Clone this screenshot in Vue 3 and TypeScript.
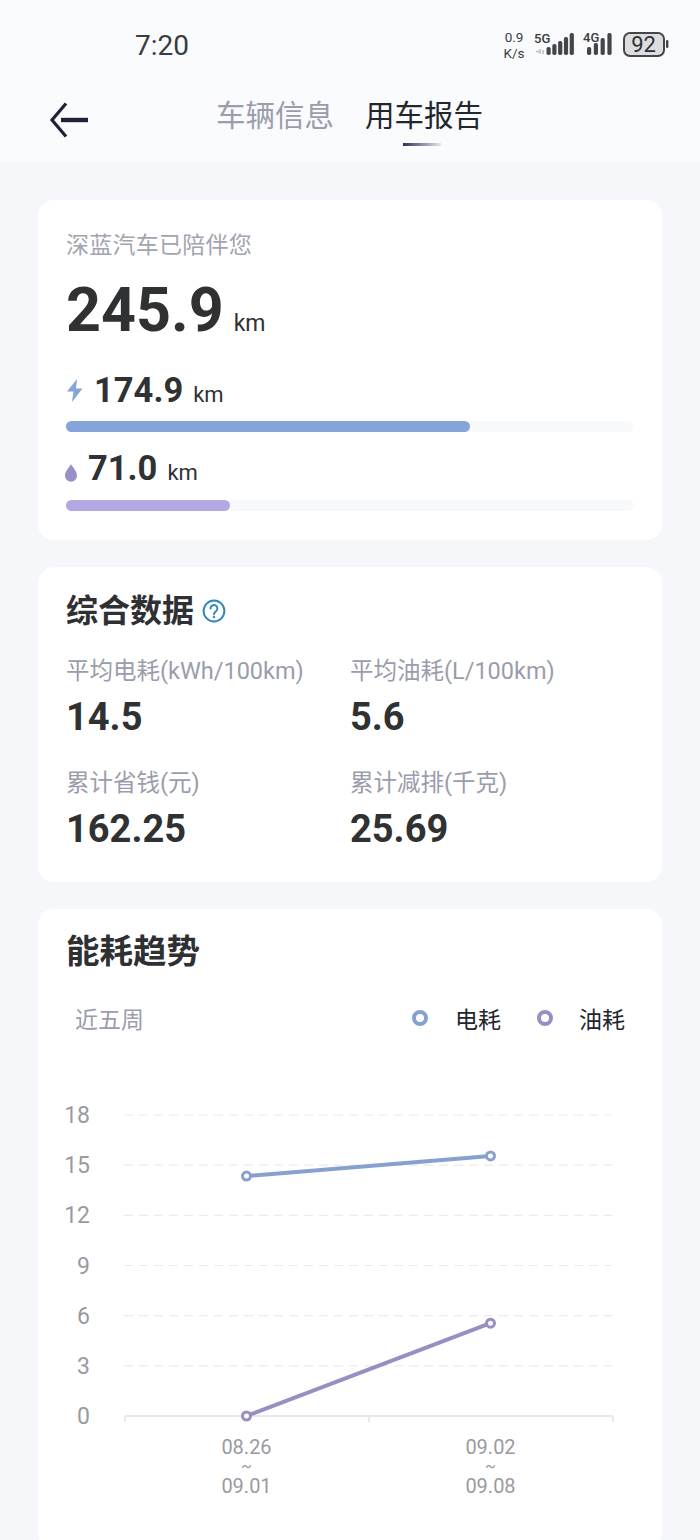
<template>
  <div class="page">
    <header class="top">
      <div class="status">
        <span class="time">7:20</span>
        <svg class="status-icons" width="170" height="34" viewBox="0 0 170 34">
          <text x="14" y="13" class="net">0.9</text>
          <text x="14" y="28.5" class="net">K/s</text>
          <text x="34" y="14" class="gen">5G</text>
          <path d="M36 22.500h3M40 20v5M43 21v4" class="tiny" />
          <rect v-for="b in fiveG" :key="'a' + b.x" :x="b.x" :y="b.y" width="4.2" :height="b.h" rx="1.8" class="bar" />
          <text x="83" y="13" class="gen">4G</text>
          <rect v-for="b in fourG" :key="'b' + b.x" :x="b.x" :y="b.y" width="4.2" :height="b.h" rx="1.8" class="bar" />
          <rect x="124" y="4" width="40" height="23" rx="6" class="batt" />
          <rect x="166" y="11" width="2.4" height="8" rx="1.2" class="bar" />
          <text x="143.5" y="23" class="batt-num">92</text>
        </svg>
      </div>
      <nav class="nav">
        <svg class="back" width="40" height="36" viewBox="0 0 40 36">
          <path d="M17 1.500 3 18l14 16.500" />
          <path d="M12 18h27" class="shaft" />
        </svg>
        <div class="tabs">
          <span class="tab">车辆信息</span>
          <span class="tab on">用车报告</span>
        </div>
      </nav>
    </header>

    <main class="list">
      <section class="card total">
        <p class="caption">深蓝汽车已陪伴您</p>
        <p class="sum"><b>245.9</b><i>km</i></p>
        <div class="range">
          <svg width="18" height="24" viewBox="0 0 18 24"><path d="M11 0 1 12.500h6.500L6 23 16.500 9.500H10z" fill="#84a4da" /></svg>
          <b>174.9</b><i>km</i>
        </div>
        <div class="track"><div class="fill" :style="{ width: '71.2%' }"></div></div>
        <div class="range oil">
          <svg width="12" height="18" viewBox="0 0 13 19"><path d="M6.500 0C9 4 13 7.500 13 12.500a6.500 6.500 0 0 1-13 0C0 7.500 4 4 6.500 0z" fill="#9b8fc8" /></svg>
          <b>71.0</b><i>km</i>
        </div>
        <div class="track low"><div class="fill purple" :style="{ width: '28.8%' }"></div></div>
      </section>

      <section class="card data">
        <h2>综合数据
          <svg width="24" height="24" viewBox="0 0 24 24">
            <circle cx="12" cy="12" r="10.400" fill="none" stroke="#2f87c0" stroke-width="2" />
            <path d="M8.600 9.500a3.400 3.400 0 1 1 5.400 2.700c-1.300 1-2 1.600-2 3" fill="none" stroke="#2f87c0" stroke-width="2" stroke-linecap="round" />
            <circle cx="12" cy="18" r="1.200" fill="#2f87c0" />
          </svg>
        </h2>
        <div class="grid">
          <div v-for="s in stats" :key="s.label" class="stat">
            <span>{{ s.label }}</span>
            <b>{{ s.value }}</b>
          </div>
        </div>
      </section>

      <section class="card trend">
        <h2>能耗趋势</h2>
        <div class="trend-head">
          <span class="period">近五周</span>
          <div class="legend">
            <span class="ring blue"></span><span class="name">电耗</span>
            <span class="ring violet"></span><span class="name second">油耗</span>
          </div>
        </div>
        <svg class="chart" width="624" height="420" viewBox="0 0 624 420">
          <g v-for="t in ticks" :key="t">
            <line v-if="t > 0" x1="86" x2="574" :y1="yOf(t)" :y2="yOf(t)" class="grid-line" />
            <text x="52" :y="yOf(t) + 8" class="tick">{{ t }}</text>
          </g>
          <path :d="`M87 ${yOf(0)}H575M87 ${yOf(0)}v6M331 ${yOf(0)}v6M575 ${yOf(0)}v6`" class="axis" />
          <polyline :points="linePoints(power)" class="line" stroke="#86a0d0" />
          <polyline :points="linePoints(oil)" class="line" stroke="#9a8dc2" />
          <circle v-for="(v, i) in power" :key="'p' + i" :cx="xs[i]" :cy="yOf(v)" r="4" class="dot" stroke="#86a0d0" />
          <circle v-for="(v, i) in oil" :key="'o' + i" :cx="xs[i]" :cy="yOf(v)" r="4" class="dot" stroke="#9a8dc2" />
          <g v-for="(d, i) in dates" :key="d[0]">
            <text :x="xs[i]" y="352" class="date">{{ d[0] }}</text>
            <text :x="xs[i]" y="370" class="date wave">~</text>
            <text :x="xs[i]" y="391" class="date">{{ d[1] }}</text>
          </g>
        </svg>
      </section>
    </main>
  </div>
</template>

<script setup lang="ts">
const makeBars = (start: number, pitch: number, heights: number[]) =>
  heights.map((h, i) => ({ x: start + i * pitch, y: 26 - h, h }))

const fiveG = makeBars(46.5, 5.8, [8, 11, 14, 18, 22])
const fourG = makeBars(87, 6.8, [8, 12, 17, 22])

const stats = [
  { label: '平均电耗(kWh/100km)', value: '14.5' },
  { label: '平均油耗(L/100km)', value: '5.6' },
  { label: '累计省钱(元)', value: '162.25' },
  { label: '累计减排(千克)', value: '25.69' },
]

const ticks = [18, 15, 12, 9, 6, 3, 0]
const xs = [208.5, 452.5]
const power = [14.35, 15.55]
const oil = [0, 5.55]
const dates = [
  ['08.26', '09.01'],
  ['09.02', '09.08'],
]

// y 轴 0 在 313,18 在 12
const yOf = (v: number) => 314 - (v * 301) / 18
const linePoints = (vals: number[]) => vals.map((v, i) => `${xs[i]},${yOf(v)}`).join(' ')
</script>

<style>
body {
  background: #f6f7fb;
}
</style>

<style scoped>
.page {
  width: 700px;
  height: 1540px;
  overflow: hidden;
  background: #f6f7fb;
  font-family: Roboto, "Noto Sans CJK SC", sans-serif;
  color: #303133;
}
p,
h2 {
  margin: 0;
}
i {
  font-style: normal;
}
.top {
  height: 162px;
  background: linear-gradient(180deg, #f9fafc, #fafbfc);
}
.status {
  height: 78px;
  padding: 0 30px 0 135px;
  display: flex;
  align-items: flex-end;
  justify-content: space-between;
  box-sizing: border-box;
}
.time {
  font-size: 28px;
  line-height: 32px;
  margin-bottom: 16px;
  color: #3a3c40;
}
.status-icons {
  margin-bottom: 15px;
}
.net {
  font-size: 13.500px;
  text-anchor: middle;
  fill: #3a3c40;
}
.gen {
  font-size: 13px;
  font-weight: 500;
  fill: #3a3c40;
}
.tiny {
  stroke: #b9bcc2;
  stroke-width: 1.5;
  fill: none;
}
.bar {
  fill: #44464a;
}
.batt {
  fill: #dcdde0;
  stroke: #44464a;
  stroke-width: 2;
}
.batt-num {
  font-size: 22px;
  text-anchor: middle;
  fill: #2f3033;
}
.nav {
  height: 84px;
  padding-left: 49px;
  display: flex;
}
.back {
  margin-top: 24px;
}
.back path {
  fill: none;
  stroke: #1f2236;
  stroke-width: 3.2;
}
.back .shaft {
  stroke-width: 4.4;
}
.tabs {
  margin-left: 127px;
  display: flex;
  gap: 31px;
  align-items: flex-start;
}
.tab {
  position: relative;
  font-size: 29.500px;
  line-height: 40px;
  margin-top: 18px;
  color: #9a9dab;
}
.tab.on {
  color: #24262e;
}
.tab.on::after {
  content: "";
  position: absolute;
  left: 38px;
  bottom: -10px;
  width: 38px;
  height: 3px;
  background: linear-gradient(90deg, #2c3058, #e6e8ee);
}
.list {
  padding: 38px 38px 0;
  display: flex;
  flex-direction: column;
  gap: 27px;
}
.card {
  background: #fff;
  border-radius: 16px;
  padding: 0 28px;
}
.total {
  height: 340px;
  box-sizing: border-box;
  padding-top: 28px;
}
.caption {
  font-size: 23px;
  letter-spacing: 0.25px;
  line-height: 36px;
  color: #a2a5af;
}
.sum {
  margin-top: 9px;
  line-height: 74px;
  height: 74px;
}
.sum b {
  font-size: 61px;
  font-weight: 700;
}
.sum i {
  font-size: 23px;
  margin-left: 10px;
}
.range {
  margin-top: 23px;
  height: 44px;
  display: flex;
  align-items: baseline;
}
.range svg {
  margin: -3px 10px 0 0;
  align-self: center;
}
.range b {
  font-size: 34.500px;
  font-weight: 700;
}
.range i {
  font-size: 22px;
  margin-left: 10px;
}
.range.oil {
  margin-top: 16px;
}
.range.oil svg {
  margin: 6px 11px 0 -1px;
}
.track {
  margin-top: 7px;
  height: 11px;
  border-radius: 6px;
  background: #f8f9fb;
}
.track.low {
  margin-top: 8px;
}
.fill {
  height: 100%;
  border-radius: 6px;
  background: #84a4da;
}
.fill.purple {
  background: #b4a7e4;
}
.data {
  height: 315px;
  box-sizing: border-box;
  padding-top: 22px;
}
h2 {
  font-size: 32px;
  line-height: 44px;
  font-weight: 700;
  color: #2f3033;
  display: flex;
  align-items: center;
  gap: 8px;
}
.grid {
  margin-top: 20px;
  display: grid;
  grid-template-columns: 284px 1fr;
  row-gap: 20px;
}
.stat {
  display: flex;
  flex-direction: column;
}
.stat span {
  font-size: 23.500px;
  line-height: 36px;
  color: #9a9dab;
}
.stat b {
  font-size: 38px;
  line-height: 56px;
  font-weight: 700;
}
.trend {
  height: 640px;
  box-sizing: border-box;
  padding-top: 21px;
}
.trend h2 {
  font-size: 33.500px;
}
.trend-head {
  margin-top: 24px;
  padding: 0 9px;
  display: flex;
  justify-content: space-between;
  align-items: center;
  height: 40px;
}
.period {
  font-size: 23px;
  color: #9a9dab;
}
.legend {
  display: flex;
  align-items: center;
}
.ring {
  width: 16px;
  height: 16px;
  box-sizing: border-box;
  border-radius: 50%;
  border: 4px solid;
}
.ring.blue {
  border-color: #86a0d0;
}
.ring.violet {
  border-color: #9a8dc2;
  margin-left: 36px;
}
.name {
  margin-left: 27px;
  font-size: 23px;
  color: #24262e;
}
.name.second {
  margin-left: 26px;
}
.chart {
  display: block;
  margin: 64px 0 0 -28px;
}
.grid-line {
  stroke: #ebecef;
  stroke-width: 1.2;
  stroke-dasharray: 9 6;
}
.tick {
  font-size: 23px;
  text-anchor: end;
  fill: #9a9a9f;
}
.axis {
  fill: none;
  stroke: #e8e9ec;
  stroke-width: 2;
}
.line {
  fill: none;
  stroke-width: 4;
}
.dot {
  fill: #fff;
  stroke-width: 3;
}
.date {
  font-size: 20px;
  text-anchor: middle;
  fill: #9a9a9f;
}
.wave {
  font-size: 16px;
}
</style>
